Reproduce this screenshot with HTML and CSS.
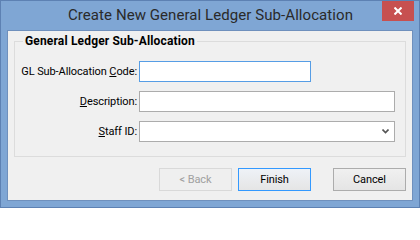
FILE: index.html
```html
<!DOCTYPE html>
<html>
<head>
<meta charset="utf-8">
<link rel="stylesheet" href="styles.css">
</head>
<body>
<div class="window">
  <div class="titlebar">
    <span class="title">Create New General Ledger Sub-Allocation</span>
    <div class="close">
      <svg width="8" height="8" viewBox="0 0 8 8"><path d="M0.5 0.5 L7.5 7.5 M7.5 0.5 L0.5 7.5" stroke="#fff" stroke-width="2" fill="none"/></svg>
    </div>
  </div>
  <div class="client">
    <fieldset class="group">
      <legend class="group-title">General Ledger Sub-Allocation</legend>
      <div class="form">
        <label class="label">GL Sub-Allocation <u>C</u>ode:</label>
        <div class="field field-short field-focus"></div>
        <label class="label"><u>D</u>escription:</label>
        <div class="field field-long"></div>
        <label class="label"><u>S</u>taff ID:</label>
        <div class="field field-long field-select">
          <svg width="7" height="5" viewBox="0 0 7 5"><path d="M0.5 0.5 L3.5 3.5 L6.5 0.5" stroke="#555" stroke-width="1.6" fill="none"/></svg>
        </div>
      </div>
    </fieldset>
    <div class="buttons">
      <div class="btn btn-disabled">&lt; Back</div>
      <div class="btn btn-default">Finish</div>
      <div class="btn btn-cancel">Cancel</div>
    </div>
  </div>
</div>
</body>
</html>
```
FILE: styles.css
```css
html, body {
  margin: 0;
  padding: 0;
}
body {
  width: 420px;
  height: 208px;
  overflow: hidden;
  font-family: Roboto, "Noto Sans", sans-serif;
  font-size: 11px;
  letter-spacing: -0.1px;
}
.window {
  box-sizing: border-box;
  width: 420px;
  height: 208px;
  border: 1px solid #5d81b3;
  background: #7fa6d4;
  padding: 0 6px 6px 6px;
  display: flex;
  flex-direction: column;
}
.titlebar {
  height: 29px;
  flex: none;
  display: grid;
  grid-template-columns: 1fr auto 1fr;
  margin: 0 -6px;
}
.title {
  grid-column: 2;
  font-size: 15px;
  letter-spacing: 0.07px;
  color: #2a2a2a;
  line-height: 29px;
  white-space: nowrap;
  padding-left: 1px;
}
.close {
  grid-column: 3;
  justify-self: end;
  width: 32px;
  height: 20px;
  margin-right: 5px;
  background: #c75050;
  display: flex;
  align-items: center;
  justify-content: center;
}
.client {
  flex: 1;
  border: 1px solid #6f90bd;
  background: #f0f0f0;
  display: flex;
  flex-direction: column;
}
.group {
  margin: 3px 6px 0 6px;
  border: 1px solid #dcdcdc;
  padding: 13px 10px 14px 0;
}
.group-title {
  margin-left: 8px;
  padding: 0 2px;
  font-size: 12px;
  font-weight: bold;
  letter-spacing: 0.16px;
  line-height: 14px;
  color: #000;
}
.form {
  display: grid;
  grid-template-columns: 122px auto;
  column-gap: 2px;
  row-gap: 9px;
  align-items: center;
}
.label {
  text-align: right;
  color: #000;
  white-space: nowrap;
}
.field {
  box-sizing: border-box;
  height: 21px;
  background: #fff;
  border: 1px solid #acacac;
}
.field-short { width: 172px; }
.field-long { width: 256px; }
.field-focus { border-color: #569de5; }
.field-select {
  display: flex;
  align-items: center;
  justify-content: flex-end;
  padding-right: 5px;
}
.buttons {
  display: flex;
  justify-content: flex-end;
  margin-top: 11px;
  padding-right: 6px;
}
.btn {
  box-sizing: border-box;
  width: 73px;
  height: 23px;
  display: flex;
  align-items: center;
  justify-content: center;
  border: 1px solid #acacac;
  background: linear-gradient(#f0f0f0, #e5e5e5);
  color: #000;
}
.btn-disabled {
  border-color: #d9d9d9;
  background: #efefef;
  color: #a0a0a0;
}
.btn-default {
  margin-left: 6px;
  border-color: #3399ff;
  background: linear-gradient(#eef2f7, #e5e5e5);
}
.btn-cancel {
  margin-left: 22px;
}
```
